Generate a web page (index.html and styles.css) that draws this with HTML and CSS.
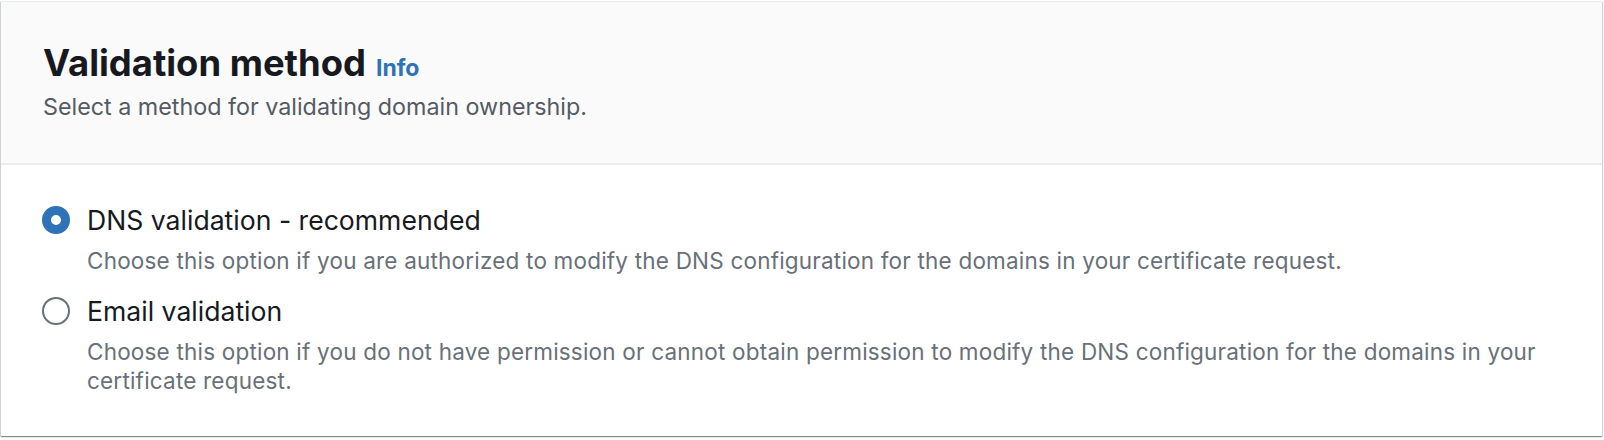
FILE: index.html
```html
<!DOCTYPE html>
<html lang="en">
<head>
<meta charset="utf-8">
<title>Validation method</title>
<link rel="stylesheet" href="styles.css">
</head>
<body>
<div class="container">
  <div class="header">
    <h2 class="title"><span class="title-text">Validation method</span><a class="info" href="#">Info</a></h2>
    <p class="subtitle">Select a method for validating domain ownership.</p>
  </div>
  <div class="content">
    <div class="radio-group">
      <label class="radio">
        <span class="control checked"></span>
        <span class="text">
          <span class="label">DNS validation - recommended</span>
          <span class="description">Choose this option if you are authorized to modify the DNS configuration for the domains in your certificate request.</span>
        </span>
      </label>
      <label class="radio">
        <span class="control"></span>
        <span class="text">
          <span class="label">Email validation</span>
          <span class="description">Choose this option if you do not have permission or cannot obtain permission to modify the DNS configuration for the domains in your certificate request.</span>
        </span>
      </label>
    </div>
  </div>
</div>
</body>
</html>
```
FILE: styles.css
```css
html, body {
  margin: 0;
  padding: 0;
  background: #ffffff;
}
body {
  font-family: Inter, "Liberation Sans", sans-serif;
  color: #16191f;
}
.container {
  margin: 1px 2px 4px 1px;
  background: #ffffff;
  box-shadow: 0 1px 1px 0 rgba(0, 28, 36, 0.3), 1px 1px 1px 0 rgba(0, 28, 36, 0.15), -1px 1px 1px 0 rgba(0, 28, 36, 0.15);
  border-top: 1px solid #eaeded;
}
.header {
  background: #fafafa;
  border-bottom: 2px solid #eaeded;
  padding: 40px 42px 40px 42px;
}
.title {
  margin: 0;
  display: flex;
  align-items: baseline;
  gap: 10px;
  font-size: 36.4px;
  line-height: 42px;
  font-weight: 700;
  color: #16191f;
}
.info {
  font-size: 23px;
  font-weight: 700;
  color: #2e72b8;
  text-decoration: none;
}
.subtitle {
  margin: 2px 0 0 0;
  font-size: 23.3px;
  line-height: 32px;
  color: #545b64;
}
.content {
  padding: 37px 20px 41px 41px;
}
.radio-group {
  display: flex;
  flex-direction: column;
  gap: 18px;
}
.radio {
  display: flex;
  align-items: flex-start;
  gap: 17px;
}
.control {
  flex: none;
  box-sizing: border-box;
  width: 28px;
  height: 28px;
  margin-top: 4px;
  border-radius: 50%;
  border: 2.5px solid #687078;
  background: #ffffff;
}
.control.checked {
  border: 9px solid #2e72b8;
}
.text {
  display: flex;
  flex-direction: column;
  gap: 8px;
}
.label {
  font-size: 26.6px;
  line-height: 36px;
  color: #16191f;
}
.description {
  font-size: 22.5px;
  letter-spacing: 0.2px;
  line-height: 29px;
  color: #687078;
}
```
